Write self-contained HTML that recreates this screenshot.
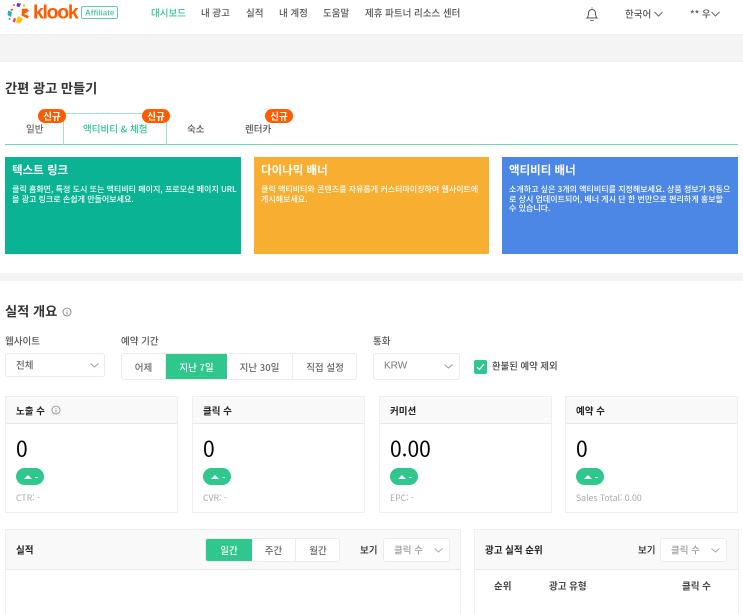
<!DOCTYPE html>
<html lang="ko"><head><meta charset="utf-8"><style>
html,body{margin:0;padding:0;background:#fff}
#p{position:relative;width:743px;height:614px;overflow:hidden;background:#fff;font-family:"Liberation Sans","Noto Sans CJK KR",sans-serif;color:#444}
#p div{position:absolute;box-sizing:border-box}
.t{white-space:nowrap;font-family:"Noto Sans CJK KR",sans-serif;transform:translateY(-50%);line-height:1.2}
.n{font-size:9.5px;font-weight:500;color:#555;top:13px}
.card{top:157px;height:97px;color:#fff}
.ct{font-size:11.5px;font-weight:700;color:#fff;left:7px;transform:none}
.cd{font-size:8px;font-weight:500;color:#fff;left:7px;top:28px;line-height:9.6px;white-space:nowrap;transform:none;font-family:"Noto Sans CJK KR",sans-serif}
.bd{top:109px;width:28px;height:14px;border-radius:7px;background:#ff5b00;color:#fff;font:700 9.5px/14px "Noto Sans CJK KR",sans-serif;text-align:center}
.kp{top:396px;height:117px;border:1px solid #eee;background:#fff}
.kh{left:0;top:0;right:0;height:27px;background:#f9f9f9;border-bottom:1px solid #e9e9e9}
.kl{left:10px;top:14px;font-size:9.5px;font-weight:700;color:#222}
.kv{left:10px;top:52px;font-size:21px;color:#000}
.pill{left:10px;top:71px;width:28px;height:17px;border-radius:9px;background:#2fc78d}
.pill:before{content:"";position:absolute;left:8px;top:7px;border-left:4px solid transparent;border-right:4px solid transparent;border-bottom:4px solid #fff}
.pill:after{content:"";position:absolute;left:19px;top:9px;width:3px;height:1px;background:#cfeee2}
.ks{left:10px;top:100.500px;font-size:8.700px;color:#a8a8a8}
.lb{font-size:9.5px;color:#555;font-weight:500}
.sel{border:1px solid #ebebeb;border-radius:3px;background:#fff}
.btn{font-size:9.5px;color:#666;font-weight:500;text-align:center;border-right:1px solid #ebebeb;top:0;bottom:0;display:flex;align-items:center;justify-content:center;font-family:"Noto Sans CJK KR",sans-serif}
.on{background:#2fc78d;color:#fff;border:none}
svg{position:absolute;display:block}
.ph{left:0;top:0;right:0;height:40px;background:#f9f9f9;border-bottom:1px solid #e9e9e9}
.pn{top:529px;height:100px;border:1px solid #eee;background:#fff}
</style></head><body><div id="p">
<svg style="left:6px;top:2px" width="24" height="22" viewBox="0 0 24 22">
<path d="M11 1l4 .5-1.500 3.500-3-.5z" fill="#5a3fd6"/><circle cx="8" cy="3" r="1" fill="#ff5b00"/><circle cx="18" cy="3.500" r="1.200" fill="#ffbf00"/>
<path d="M2 8.500l4 1.500-1 5-3.500-2z" fill="#18b5c8"/><path d="M4 8l2-1.500 1.500 1.500-2 1z" fill="#ff5b00"/>
<path d="M16 7l5-.5 2 2.500-5 3 5 2-1.500 2.500-6-3z" fill="#ff5b00"/>
<path d="M12 14l5 3-3.500 5-3.500-2z" fill="#ffc400"/><path d="M8 16l2 .5-1 4-2.500-1z" fill="#e5484d"/><circle cx="3.500" cy="17" r="1" fill="#18b5c8"/>
</svg>
<div class="t" style="left:33px;top:13px;font:700 19.500px 'Liberation Sans',sans-serif;color:#ff5b00;letter-spacing:-1.300px">klook</div>
<div style="left:81px;top:6px;width:37px;height:13px;border:1px solid #5fd0b5;border-radius:2px"></div>
<div class="t" style="left:85px;top:13px;font:700 8px 'Liberation Sans',sans-serif;color:#5fc9b0">Affiliate</div>
<div class="t n" style="left:151px;color:#2fc78d">대시보드</div>
<div class="t n" style="left:201px">내 광고</div>
<div class="t n" style="left:246px">실적</div>
<div class="t n" style="left:279px">내 계정</div>
<div class="t n" style="left:323px">도움말</div>
<div class="t n" style="left:365px">제휴 파트너 리소스 센터</div>
<svg style="left:585px;top:6px" width="14" height="16" viewBox="0 0 14 16" fill="none" stroke="#555" stroke-width="1"><path d="M2 12c1-1 1.500-2 1.500-5a3.500 3.500 0 0 1 7 0c0 3 .5 4 1.500 5z"/><path d="M7 2.500V1.500M5.500 14c.5.8 2.500.8 3 0"/></svg>
<div class="t n" style="left:625px;top:14px">한국어</div>
<svg style="left:654px;top:11px" width="9" height="6" fill="none" stroke="#666"><path d="M.5 1L4.500 5l4-4"/></svg>
<div class="t n" style="left:690px;top:14px">** 우</div>
<svg style="left:711px;top:11px" width="9" height="6" fill="none" stroke="#666"><path d="M.5 1L4.500 5l4-4"/></svg>
<div style="left:0;top:34px;width:743px;height:28px;background:#f4f4f4;border-top:1px solid #eee;border-bottom:1px solid #eee"></div>
<div class="t" style="left:5px;top:88px;font-size:13.200px;font-weight:700;color:#333">간편 광고 만들기</div>
<div style="left:5px;top:144px;width:733px;height:1px;background:#6fd8b0"></div>
<div style="left:63px;top:113px;width:104px;height:32px;border:1px solid #9fe3ca;border-bottom:none"></div>
<div class="t n" style="left:26px;top:129px;color:#666">일반</div>
<div class="t n" style="left:83px;top:129px;color:#2fc78d">액티비티 &amp; 체험</div>
<div class="t n" style="left:187px;top:129px">숙소</div>
<div class="t n" style="left:245px;top:129px">렌터카</div>
<div class="bd" style="left:38px">신규</div><div class="bd" style="left:142px">신규</div><div class="bd" style="left:265px">신규</div>
<div class="card" style="left:5px;width:236px;background:#09b394"><div class="t ct" style="top:7px">텍스트 링크</div><div class="cd" style="top:28px">클릭 홈화면, 특정 도시 또는 액티비티 페이지, 프로모션 페이지 URL<br>을 광고 링크로 손쉽게 만들어보세요.</div></div>
<div class="card" style="left:254px;width:235px;background:#f8ae30"><div class="t ct" style="top:7px">다이나믹 배너</div><div class="cd" style="top:28px">클릭 액티비티와 콘텐츠를 자유롭게 커스터마이징하여 웹사이트에<br>게시해보세요.</div></div>
<div class="card" style="left:502px;width:236px;background:#4d87e5"><div class="t ct" style="top:7px">액티비티 배너</div><div class="cd" style="top:28px">소개하고 싶은 3개의 액티비티를 지정해보세요. 상품 정보가 자동으<br>로 상시 업데이트되어, 배너 게시 단 한 번만으로 편리하게 홍보할<br>수 있습니다.</div></div>
<div style="left:0;top:273px;width:743px;height:8px;background:#f4f4f4"></div>
<div class="t" style="left:5px;top:311px;font-size:13.200px;font-weight:700;color:#333">실적 개요</div>
<svg style="left:62px;top:307px" width="10" height="10" fill="none" stroke="#777" stroke-width=".8"><circle cx="5" cy="5" r="4"/><path d="M5 3v.8M5 4.500V7.500"/></svg>
<div class="t lb" style="left:5px;top:341px">웹사이트</div>
<div class="t lb" style="left:121px;top:341px">예약 기간</div>
<div class="t lb" style="left:373px;top:341px">통화</div>
<div class="sel" style="left:5px;top:353px;width:100px;height:24px"></div>
<div class="t lb" style="left:16px;top:365px;color:#666">전체</div>
<svg style="left:90px;top:363px" width="9" height="5" fill="none" stroke="#999"><path d="M.5.500L4.500 4l4-3.500"/></svg>
<div class="sel" style="left:121px;top:353px;width:236px;height:27px;overflow:hidden">
<div class="btn" style="left:0;width:44px">어제</div>
<div class="btn on" style="left:44px;width:61px">지난 7일</div>
<div class="btn" style="left:105px;width:66px">지난 30일</div>
<div class="btn" style="left:171px;width:64px;border:none">직접 설정</div>
</div>
<div class="sel" style="left:373px;top:353px;width:87px;height:27px"></div>
<div class="t" style="left:384px;top:366px;font:10px 'Liberation Sans',sans-serif;color:#777">KRW</div>
<svg style="left:444px;top:364px" width="9" height="5" fill="none" stroke="#999"><path d="M.5.500L4.500 4l4-3.500"/></svg>
<div style="left:474px;top:360px;width:13px;height:14px;background:#2fc78d;border-radius:2px"></div>
<svg style="left:476px;top:363px" width="9" height="8" fill="none" stroke="#fff" stroke-width="1.200"><path d="M1 4l2.500 2.500L8 1"/></svg>
<div class="t" style="left:492px;top:366px;font-size:9.400px;font-weight:500;color:#444">환불된 예약 제외</div>
<div class="kp" style="left:5px;width:173px"><div class="kh"></div><div class="t kl">노출 수</div>
<svg style="left:45px;top:8px" width="10" height="10" fill="none" stroke="#888" stroke-width=".8"><circle cx="5" cy="5" r="4"/><path d="M5 3v.8M5 4.500V7.500"/></svg>
<div class="t kv">0</div><div class="pill"></div><div class="t ks">CTR: -</div></div>
<div class="kp" style="left:192px;width:173px"><div class="kh"></div><div class="t kl">클릭 수</div><div class="t kv">0</div><div class="pill"></div><div class="t ks">CVR: -</div></div>
<div class="kp" style="left:379px;width:173px"><div class="kh"></div><div class="t kl">커미션</div><div class="t kv">0.00</div><div class="pill"></div><div class="t ks">EPC: -</div></div>
<div class="kp" style="left:565px;width:173px"><div class="kh"></div><div class="t kl">예약 수</div><div class="t kv">0</div><div class="pill"></div><div class="t ks">Sales Total: 0.00</div></div>
<div class="pn" style="left:5px;width:456px"><div class="ph"></div><div class="t kl" style="top:20px">실적</div>
<div class="sel" style="left:199px;top:8px;width:135px;height:24px;overflow:hidden">
<div class="btn on" style="left:0;width:46px">일간</div><div class="btn" style="left:46px;width:44px">주간</div><div class="btn" style="left:90px;width:44px;border:none">월간</div></div>
<div class="t kl" style="left:354px;top:20px;font-weight:500">보기</div>
<div class="sel" style="left:377px;top:8px;width:67px;height:24px"></div>
<div class="t lb" style="left:388px;top:20px;color:#999">클릭 수</div>
<svg style="left:428px;top:18px" width="9" height="5" fill="none" stroke="#aaa"><path d="M.5.500L4.500 4l4-3.500"/></svg></div>
<div class="pn" style="left:474px;width:265px"><div class="ph"></div><div class="t kl" style="top:20px">광고 실적 순위</div>
<div class="t kl" style="left:163px;top:20px;font-weight:500">보기</div>
<div class="sel" style="left:185px;top:8px;width:67px;height:24px"></div>
<div class="t lb" style="left:196px;top:20px;color:#999">클릭 수</div>
<svg style="left:236px;top:18px" width="9" height="5" fill="none" stroke="#aaa"><path d="M.5.500L4.500 4l4-3.500"/></svg>
<div class="t kl" style="left:19px;top:56px;color:#444">순위</div>
<div class="t kl" style="left:74px;top:56px;color:#444">광고 유형</div>
<div class="t kl" style="left:207px;top:56px;color:#444">클릭 수</div></div>
</div></body></html>
